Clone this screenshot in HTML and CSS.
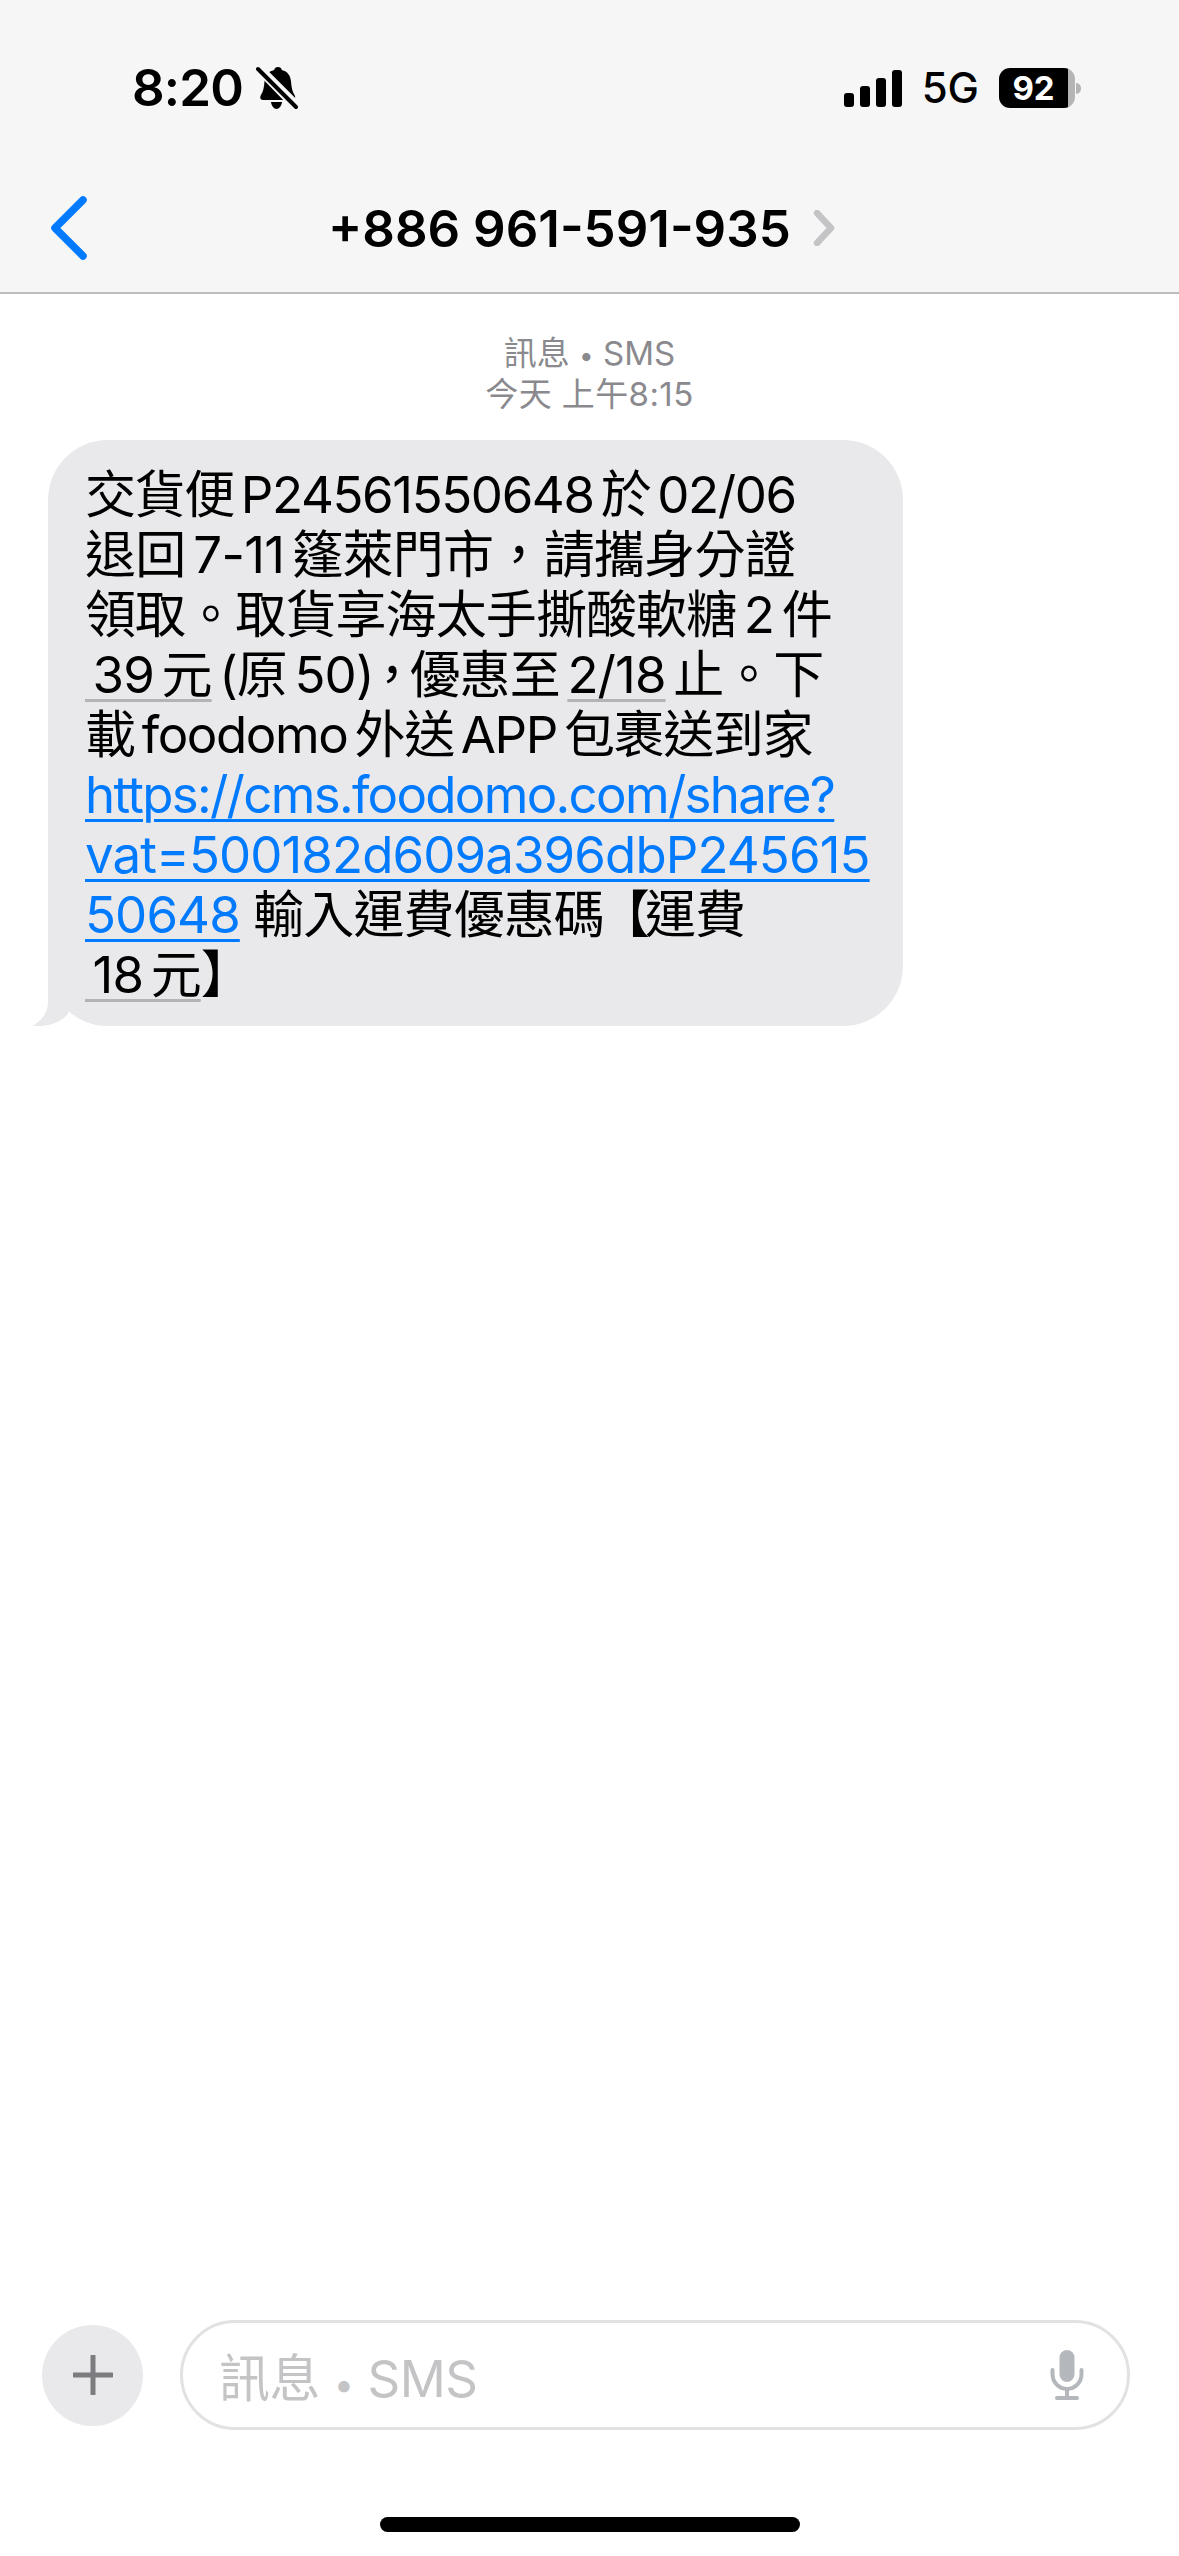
FILE: index.html
```html
<!DOCTYPE html>
<html lang="zh-Hant">
<head>
    <meta charset="UTF-8">
    <title>訊息</title>
    <link rel="stylesheet" href="styles.css">
</head>
<body>
    <div class="page">
        <header class="top">
            <div class="status">
                <div class="status-left">
                    <span class="time">8:20</span>
                    <svg class="bell" width="42" height="44" viewBox="0 0 42 44">
                        <path d="M22 1c2 0 3.500 1.300 3.800 3 6 1.400 8.700 6 9.200 11.500.5 6 1.300 10 3.500 13.500 1.300 2 1 5-2 5H7c-3 0-3.300-3-2-5 2.200-3.500 3-7.500 3.500-13.500C9 10 12 5.400 18.200 4 18.500 2.300 20 1 22 1z" fill="#000"/>
                        <path d="M15 36h11c-.5 4-3 7-5.500 7S15.500 40 15 36z" fill="#000"/>
                        <path d="M4 1l38 38" stroke="#f6f6f6" stroke-width="6"/>
                        <path d="M1 5l36 37" stroke="#f6f6f6" stroke-width="3"/>
                        <path d="M2 3l38 38" stroke="#000" stroke-width="4" stroke-linecap="round"/>
                    </svg>
                </div>
                <div class="status-right">
                    <div class="signal">
                        <i class="bar bar1"></i><i class="bar bar2"></i><i class="bar bar3"></i><i class="bar bar4"></i>
                    </div>
                    <span class="net">5G</span>
                    <div class="battery"><span class="level">92</span></div>
                    <i class="nub"></i>
                </div>
            </div>
            <nav class="nav">
                <svg class="back" width="38" height="64" viewBox="0 0 38 64">
                    <path d="M33 4L5 32l28 28" fill="none" stroke="#007aff" stroke-width="7.500" stroke-linecap="round" stroke-linejoin="round"/>
                </svg>
                <span class="title">+886 961-591-935</span>
                <svg class="more" width="22" height="36" viewBox="0 0 22 36">
                    <path d="M4 3l14 15L4 33" fill="none" stroke="#c4c4c6" stroke-width="6.500" stroke-linecap="round" stroke-linejoin="round"/>
                </svg>
            </nav>
        </header>

        <main class="thread">
            <div class="stamp">
                <div>訊息 <span class="stamp-dot">•</span> SMS</div>
                <div class="stamp-time">今天 上午8:15</div>
            </div>
            <div class="bubble">
                <div class="line tight">交貨便&#8198;P24561550648&#8198;於&#8198;02/06</div>
                <div class="line loose">退回&#8198;7-11&#8198;篷萊門市，請攜身分證</div>
                <div class="line">領取。取貨享海太手撕酸軟糖&#8198;2&#8198;件</div>
                <div class="line"><span class="detect">&#8198;39&#8198;元</span>&#8198;(原&#8198;50<span class="comma">)，</span>優惠至&#8198;<span class="detect">2/18</span>&#8198;止。下</div>
                <div class="line tight">載&#8198;foodomo&#8198;外送&#8198;APP&#8198;包裹送到家</div>
                <div class="line tighter"><a class="link" href="#">https://cms.foodomo.com/share?</a></div>
                <div class="line"><a class="link" href="#">vat=500182d609a396dbP245615</a></div>
                <div class="line"><a class="link" href="#">50648</a> 輸入運費優惠碼<span class="bracket">【</span>運費</div>
                <div class="line"><span class="detect">&#8198;18&#8198;元</span>】</div>
                <svg class="tail" width="44" height="60" viewBox="0 0 44 60">
                    <path d="M16 0v36C16 46 10 55 0 60c14 1 27-2 36-12l8-48z" fill="#e9e9eb"/>
                </svg>
            </div>
        </main>

        <footer class="compose">
            <div class="plus">
                <svg width="40" height="40" viewBox="0 0 40 40">
                    <path d="M20 1v38M1 20h38" stroke="#7c7c80" stroke-width="5" stroke-linecap="round"/>
                </svg>
            </div>
            <div class="field">
                <span class="hint">訊息 <span class="hint-dot">•</span> SMS</span>
                <svg width="34" height="50" viewBox="0 0 34 50">
                    <rect x="9.500" y="0" width="15" height="32" rx="7.500" fill="#b4b7bb"/>
                    <path d="M2.500 20v4c0 8.500 6.500 15 14.500 15s14.500-6.500 14.500-15v-4" fill="none" stroke="#b4b7bb" stroke-width="4" stroke-linecap="round"/>
                    <path d="M17 39v8" stroke="#b4b7bb" stroke-width="4"/>
                    <rect x="5" y="46" width="24" height="4" rx="2" fill="#b4b7bb"/>
                </svg>
            </div>
        </footer>
        <div class="home"><i class="home-bar"></i></div>
    </div>
</body>
</html>
```

FILE: styles.css
```css
* {
    margin: 0;
    padding: 0;
    box-sizing: border-box;
}
body {
    background-color: #fff;
    color: #000;
    font-family: Inter, "Noto Sans CJK TC", sans-serif;
}
.page {
    display: flex;
    flex-direction: column;
    width: 1179px;
    height: 2556px;
    overflow: hidden;
}

/* top bar */
.top {
    height: 294px;
    background-color: #f6f6f6;
    border-bottom: 2px solid #bdbdbd;
}
.status {
    display: flex;
    justify-content: space-between;
    align-items: center;
    height: 44px;
    margin-top: 66px;
    padding: 0 98px 0 132px;
}
.status-left {
    display: flex;
    align-items: center;
    gap: 13px;
}
.time {
    font-size: 51px;
    font-weight: 600;
    line-height: 42px;
    letter-spacing: -0.800px;
}
.status-right {
    display: flex;
    align-items: center;
}
.signal {
    display: flex;
    align-items: flex-end;
    gap: 6px;
    height: 37px;
    margin-right: 20px;
}
.bar {
    display: block;
    width: 10px;
    background-color: #000;
    border-radius: 3px;
}
.bar1 { height: 14px; }
.bar2 { height: 21px; }
.bar3 { height: 29px; }
.bar4 { height: 37px; }
.net {
    font-size: 42px;
    font-weight: 500;
    line-height: 42px;
    margin-right: 20px;
}
.battery {
    display: flex;
    align-items: center;
    justify-content: center;
    width: 76px;
    height: 40px;
    padding-right: 7px;
    background: linear-gradient(to right, #000 69px, #b5b5b5 69px);
    border-radius: 11px;
}
.level {
    color: #fff;
    font-size: 33px;
    font-weight: 700;
}
.nub {
    display: block;
    width: 5px;
    height: 11px;
    margin-left: 1px;
    background-color: #b5b5b5;
    border-radius: 0 6px 6px 0;
}
.nav {
    display: flex;
    align-items: center;
    height: 64px;
    margin-top: 86px;
    padding-left: 50px;
}
.title {
    margin-left: 240px;
    font-size: 51px;
    font-weight: 600;
    white-space: nowrap;
}
.more {
    margin-left: 22px;
}

/* messages */
.thread {
    flex: 1;
    padding: 40px 0 0 48px;
}
.stamp {
    width: 1083px;
    color: #8a8a8e;
    font-size: 33px;
    line-height: 39px;
    text-align: center;
}
.stamp-dot {
    font-size: 26px;
}
.stamp-time {
    letter-spacing: 0.400px;
}
.bubble {
    position: relative;
    width: 855px;
    height: 586px;
    margin-top: 26px;
    padding: 25px 0 0 37px;
    background-color: #e9e9eb;
    border-radius: 60px;
}
.line {
    height: 60px;
    font-size: 51px;
    line-height: 60px;
    letter-spacing: -0.900px;
    white-space: nowrap;
}
.loose {
    letter-spacing: -0.700px;
}
.tight {
    letter-spacing: -1.400px;
}
.tighter {
    letter-spacing: -1.700px;
}
.comma {
    letter-spacing: -8px;
}
.bracket {
    margin-left: -5px;
    letter-spacing: -5px;
}
.detect {
    text-decoration: underline #b3b3b6 3px;
    text-underline-offset: 6px;
}
.link {
    color: #007aff;
    text-decoration: underline 3px;
    text-underline-offset: 6px;
}
.tail {
    position: absolute;
    left: -16px;
    bottom: 0;
}

/* compose bar */
.compose {
    display: flex;
    align-items: center;
    gap: 37px;
    padding: 0 49px 0 42px;
}
.plus {
    display: flex;
    align-items: center;
    justify-content: center;
    width: 101px;
    height: 101px;
    background-color: #e9e9eb;
    border-radius: 50%;
}
.field {
    flex: 1;
    display: flex;
    align-items: center;
    justify-content: space-between;
    height: 110px;
    padding: 0 43px 0 36px;
    border: 3px solid #e2e2e4;
    border-radius: 55px;
}
.hint {
    color: #c4c4c6;
    font-size: 51px;
    letter-spacing: -0.500px;
}
.hint-dot {
    font-size: 36px;
}
.home {
    display: flex;
    justify-content: center;
    padding: 87px 0 24px;
}
.home-bar {
    display: block;
    width: 420px;
    height: 15px;
    background-color: #000;
    border-radius: 8px;
}
```
